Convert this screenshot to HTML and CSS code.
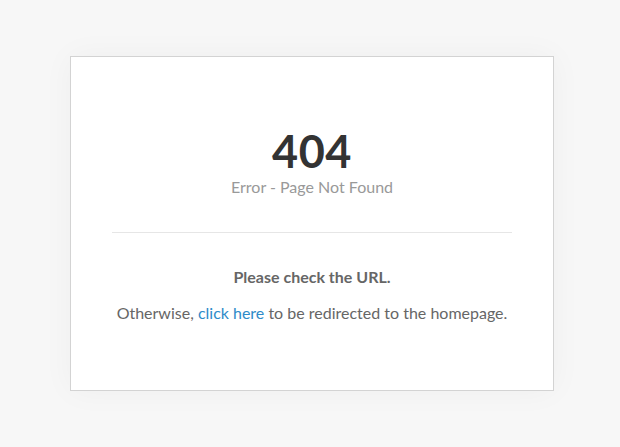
FILE: index.html
```html
<!DOCTYPE html>
<html>
<head>
<meta charset="utf-8">
<link rel="stylesheet" href="styles.css">
</head>
<body>
<div class="page">
  <div class="card">
    <h1 class="code">404</h1>
    <p class="subtitle">Error - Page Not Found</p>
    <hr class="divider">
    <p class="strong">Please check the URL.</p>
    <p class="text">Otherwise, <a href="#" class="link">click here</a> to be redirected to the homepage.</p>
  </div>
</div>
</body>
</html>
```
FILE: styles.css
```css
html, body {
  margin: 0;
  padding: 0;
  background: #f7f7f7;
  height: 100%;
}
body {
  font-family: Lato, "Open Sans", sans-serif;
  color: #666;
}
.page {
  padding: 56px 0 0 4px;
  display: flex;
  justify-content: center;
}
.card {
  width: 482px;
  height: 333px;
  background: #fff;
  border: 1px solid #d3d3d3;
  box-shadow: 0 0 30px rgba(0,0,0,0.04);
  box-sizing: content-box;
  display: flex;
  flex-direction: column;
  align-items: center;
  padding: 0;
}
.code {
  margin: 70px 0 0;
  font-size: 45px;
  line-height: 48px;
  font-weight: 700;
  color: #333;
  letter-spacing: 0.5px;
}
.subtitle {
  margin: 2px 0 0;
  font-size: 16px;
  line-height: 20px;
  color: #999;
}
.divider {
  width: 400px;
  border: 0;
  border-top: 1px solid #e6e6e6;
  margin: 35px 0 0;
}
.strong {
  margin: 34px 0 0;
  font-size: 16px;
  line-height: 20px;
  font-weight: 700;
  color: #666;
}
.text {
  margin: 16px 0 0;
  font-size: 16px;
  line-height: 20px;
  color: #666;
}
.link {
  color: #2e8bc9;
  text-decoration: none;
}
```
